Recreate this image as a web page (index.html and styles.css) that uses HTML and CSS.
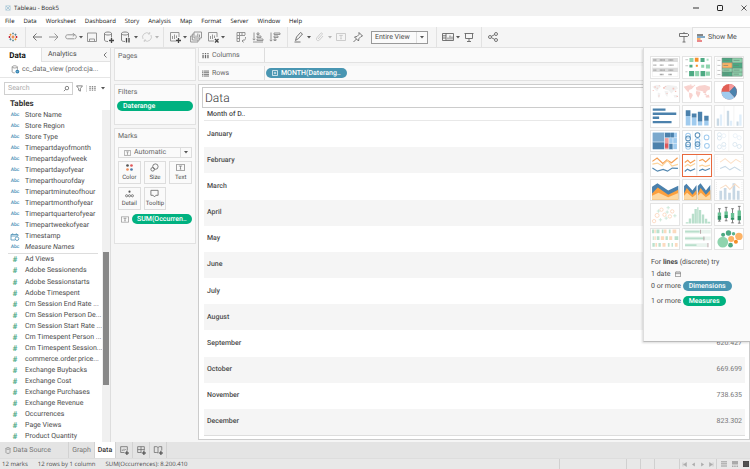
FILE: index.html
```html
<!DOCTYPE html>
<html lang="en">
<head>
	<meta charset="UTF-8">
	<title>Tableau - Book5</title>
	<meta name="viewport" content="width=device-width, initial-scale=1.0">
	<link rel="stylesheet" href="styles.css">
</head>
<body>
	<!-- Shared icons -->
	<svg class="sprite" aria-hidden="true">
		<symbol id="caret" viewBox="0 0 4 3"><path d="M0 0h4L2 2.6z" fill="#555"/></symbol>
		<symbol id="text-box" viewBox="0 0 10 8"><path d="M.5.5h9v7h-9zM3.2 2.4h3.6M5 2.4v3.4M4.2 5.8h1.6" fill="none" stroke="#777" stroke-width=".8"/></symbol>
		<symbol id="database" viewBox="0 0 12 12"><path d="M1.500 2.500v6.500c0 .9 1.300 1.500 3.500 1.500M8.500 2.500v4M1.500 2.500c0-2 7-2 7 0s-7 2-7 0z" fill="none" stroke="#777" stroke-width=".9"/></symbol>
		<symbol id="calendar" viewBox="0 0 8 8"><path d="M.5 1.500h7v6h-7zM.5 3.500h7M2.500 .5v1M5.500 .5v1" fill="none" stroke="#666" stroke-width=".8"/></symbol>
	</svg>

	<!-- Title bar -->
	<header class="title-bar">
		<svg class="app-icon" viewBox="0 0 10 10"><path d="M5 3v4M3 5h4M5 0v2M5 8v2M0 5h2M8 5h2M2 1v2M1 2h2M8 1v2M7 2h2M2 7v2M1 8h2M8 7v2M7 8h2" stroke="#6aa6c4" stroke-width=".9"/></svg>
		<span class="app-name">Tableau - Book5</span>
		<div class="window-buttons">
			<button aria-label="Minimize"><svg viewBox="0 0 8 8"><path d="M1 4h6" stroke="#333"/></svg></button>
			<button aria-label="Maximize"><svg viewBox="0 0 8 8"><rect x="1.500" y="1.500" width="5" height="5" rx=".6" fill="none" stroke="#222"/></svg></button>
			<button aria-label="Close"><svg viewBox="0 0 8 8"><path d="M1.500 1.500l5 5M6.500 1.500l-5 5" stroke="#333" stroke-width=".8"/></svg></button>
		</div>
	</header>

	<nav class="menu">
		<a href="#">File</a>
		<a href="#">Data</a>
		<a href="#">Worksheet</a>
		<a href="#">Dashboard</a>
		<a href="#">Story</a>
		<a href="#">Analysis</a>
		<a href="#">Map</a>
		<a href="#">Format</a>
		<a href="#">Server</a>
		<a href="#">Window</a>
		<a href="#">Help</a>
	</nav>

	<!-- Toolbar -->
	<div class="toolbar">
		<div class="tool-group first">
			<button class="tool" aria-label="Start page"><svg viewBox="0 0 12 12"><path d="M6 4.500v3M4.500 6h3" stroke="#e8762c" stroke-width="1.200"/><path d="M6 1.500v2M5 2.500h2M6 8.500v2M5 9.500h2" stroke="#7199a6"/><path d="M1.500 6h2M2.500 5v2M8.500 6h2M9.500 5v2" stroke="#c72035"/><path d="M3.500 2.700v2M2.500 3.700h2M8.500 7.300v2M7.500 8.300h2" stroke="#eb912c"/><path d="M8.500 2.700v2M7.500 3.700h2M3.500 7.300v2M2.500 8.300h2" stroke="#59879b"/></svg></button>
		</div>
		<div class="tool-group">
			<button class="tool" aria-label="Undo"><svg viewBox="0 0 12 12"><path d="M11 6H2M5.500 2.500L2 6l3.500 3.500" class="line dark"/></svg></button>
			<button class="tool" aria-label="Redo"><svg viewBox="0 0 12 12"><path d="M1 6h9M6.500 2.500L10 6 6.500 9.500" class="line"/></svg></button>
			<button class="tool" aria-label="Replay"><svg viewBox="0 0 12 12"><path d="M9 7.800H2.500c-2.400 0-2.400-4 0-4H9.500c2.400 0 2.400 4 0 4M7.800 2l1.800 1.800-1.800 1.700" class="line"/></svg></button>
			<button class="caret" aria-label="Replay options"><svg><use href="#caret"/></svg></button>
			<button class="tool" aria-label="Save"><svg viewBox="0 0 12 12"><path d="M1.500 2h9v8.500h-9zM3.500 10.500V8h5v2.500" class="line"/></svg></button>
			<button class="tool" aria-label="New data source"><svg viewBox="0 0 12 12"><use href="#database"/><path d="M8.500 7v5M6 9.500h5" class="bold"/></svg></button>
			<button class="tool" aria-label="Pause updates"><svg viewBox="0 0 12 12"><use href="#database"/><path d="M6.500 7v4.500M9 7v4.500" class="bold"/></svg></button>
			<button class="caret" aria-label="Pause options"><svg><use href="#caret"/></svg></button>
			<button class="tool" aria-label="Refresh"><svg viewBox="0 0 12 12"><path d="M2 8a4.300 4.300 0 0 1 6.500-5.300M10 4a4.300 4.300 0 0 1-6.500 5.300M8.700 1v2H7M3.300 11V9H5" class="line faint"/></svg></button>
			<button class="caret faded" aria-label="Refresh options"><svg><use href="#caret"/></svg></button>
		</div>
		<div class="tool-group open">
			<button class="tool" aria-label="New worksheet"><svg viewBox="0 0 12 12"><path d="M7 10H1.500V1.500h8.500V6M3.500 8V5M5.500 8V3.500M7.500 7V4.500" class="line"/><path d="M9.500 7v5M7 9.500h5" class="bold"/></svg></button>
			<button class="caret" aria-label="New options"><svg><use href="#caret"/></svg></button>
			<button class="tool" aria-label="Duplicate"><svg viewBox="0 0 12 12"><path d="M4 1h7.500v6H4zM4 3H2.300v6h7.400V7M2.300 5H.6v6H8V9M6 6V4.500M7.800 6V2.500M9.500 6V3.500" class="line"/></svg></button>
			<button class="tool" aria-label="Clear sheet"><svg viewBox="0 0 12 12"><path d="M7 10H1.500V1.500h8.500V6M3.500 8V5M5.500 8V3.500M7.500 7V4.500" class="line"/><path d="M8 8l3.500 3.500M11.500 8L8 11.500" class="bold"/></svg></button>
			<button class="caret" aria-label="Clear options"><svg><use href="#caret"/></svg></button>
		</div>
		<div class="tool-group">
			<button class="tool" aria-label="Swap rows and columns"><svg viewBox="0 0 12 12"><path d="M2 10.500V1.500h8M4.500 1.500v3M7 1.500v3M10 1.500v2.500M4.500 4.500H10M2 4.500h2.500v6H2M2 7.500h2.500M10.500 6c.3 2.500-1 4-3.500 4M8.500 8.500L7 10l1.500 1.500" class="line"/></svg></button>
			<button class="tool" aria-label="Sort ascending"><svg viewBox="0 0 12 12"><path d="M2 1.500V9M.7 7.800L2 9.200l1.300-1.400M5 2h2v1.500H5zM5 5h4v1.500H5zM5 8h6v1.500H5zM1 11h10" class="line"/></svg></button>
			<button class="tool" aria-label="Sort descending"><svg viewBox="0 0 12 12"><path d="M2 1.500V10M.7 8.800L2 10.200l1.300-1.400M5 2h6v1.500H5zM5 5h4v1.500H5zM5 8h2v1.500H5z" class="line"/></svg></button>
		</div>
		<div class="tool-group open">
			<button class="tool" aria-label="Highlight"><svg viewBox="0 0 12 12"><path d="M2.500 9.500L3.500 6l4-4.500L9.500 3l-4 4.500zM1.500 11h6" class="line dark"/></svg></button>
			<button class="caret" aria-label="Highlight options"><svg><use href="#caret"/></svg></button>
			<button class="tool" aria-label="Group members"><svg viewBox="0 0 12 12"><path d="M4 8l4-4.500c1-1-.3-2.200-1.300-1.200L3 6.600C1.400 8.500 3.700 10.800 5.500 9L9 5" class="line faint"/></svg></button>
			<button class="caret faded" aria-label="Group options"><svg><use href="#caret"/></svg></button>
			<button class="tool faded" aria-label="Show mark labels"><svg class="label-icon" viewBox="0 0 10 8"><use href="#text-box"/></svg></button>
			<button class="tool" aria-label="Fix axes"><svg viewBox="0 0 12 12"><path d="M7 1.500L10.500 5 9 5.500 7 7.500 6.500 10 2.500 6l2.500-.5 2-2zM4.500 8L1.500 11" class="line dark"/></svg></button>
			<div class="fit">
				<select aria-label="Fit"><option>Entire View</option></select>
				<svg class="select-arrow"><use href="#caret"/></svg>
			</div>
		</div>
		<div class="tool-separator"></div>
		<div class="tool-group">
			<button class="tool" aria-label="Show cards"><svg viewBox="0 0 12 12"><path d="M.5 2.500h11v7H.5zM4 2.500v7M.5 4.800H4M.5 7H4M6 8.500v-2M8 8.500V4.500M10 8.500v-3" class="line dark"/></svg></button>
			<button class="caret" aria-label="Card options"><svg><use href="#caret"/></svg></button>
			<button class="tool" aria-label="Presentation mode"><svg viewBox="0 0 12 12"><path d="M1.500 2.500h9M2.500 2.500v5h7v-5M6 7.500v3M4 10.500h4" class="line dark"/></svg></button>
		</div>
		<div class="tool-group open">
			<button class="tool" aria-label="Share"><svg viewBox="0 0 12 12"><circle cx="3" cy="6" r="1.500" class="line dark"/><circle cx="9" cy="3" r="1.500" class="line dark"/><circle cx="9" cy="9" r="1.500" class="line dark"/><path d="M4.400 5.300l3.200-1.600M4.400 6.700l3.200 1.600" class="line dark"/></svg></button>
		</div>
		<button class="tool guide" aria-label="Guide"><svg viewBox="0 0 12 12"><path d="M1.500 2.500h8L11 4 9.500 5.500h-8zM6 1v1.500M6 5.500v5.500M4.500 11h3" class="line dark"/></svg></button>
		<button class="show-me-tab">
			<svg viewBox="0 0 9 8"><path d="M0 1h6" stroke="#555" stroke-width="1.400"/><path d="M0 3h8" stroke="#4e87b0" stroke-width="1.400"/><path d="M0 5h3.500" stroke="#f28e2b" stroke-width="1.400"/><path d="M0 7h5" stroke="#e15759" stroke-width="1.400"/></svg>
			Show Me
		</button>
	</div>

	<main class="workspace">
		<!-- Data pane -->
		<aside class="data-pane">
			<div class="pane-tabs">
				<button class="active">Data</button>
				<button class="analytics">Analytics</button>
				<button class="collapse" aria-label="Collapse pane"><svg viewBox="0 0 4 6"><path d="M3.500.5L1 3l2.500 2.500" class="line dark"/></svg></button>
			</div>
			<a class="source" href="#">
				<svg viewBox="0 0 12 12"><use href="#database"/><circle cx="8.500" cy="8.700" r="2.500" fill="#2c7fb0"/><path d="M7.300 8.700l.9.9 1.500-1.800" fill="none" stroke="#fff" stroke-width=".6"/></svg>
				<span>cc_data_view (prod:cja...</span>
			</a>
			<div class="search-row">
				<div class="search">
					<input type="text" placeholder="Search" aria-label="Search">
					<svg viewBox="0 0 8 8"><circle cx="4.500" cy="3.500" r="2" class="line dark"/><path d="M3 5L1 7" class="line dark"/></svg>
				</div>
				<button aria-label="Filter fields"><svg viewBox="0 0 8 8"><path d="M.6 1h6.800L5 4v3L3 6V4z" class="line dark"/></svg></button>
				<button class="view-as" aria-label="View as list"><svg viewBox="0 0 8 8"><path d="M1.200 1v6M4 1v6M6.800 1v6" stroke="#888" stroke-width="1.600" stroke-dasharray="1.500 .5"/></svg></button>
				<button class="caret" aria-label="View options"><svg><use href="#caret"/></svg></button>
			</div>
			<h2>Tables</h2>
			<div class="fields">
				<div class="field-lists">
					<ul class="dimensions">
						<li><i>Abc</i>Store Name</li>
						<li><i>Abc</i>Store Region</li>
						<li><i>Abc</i>Store Type</li>
						<li><i>Abc</i>Timepartdayofmonth</li>
						<li><i>Abc</i>Timepartdayofweek</li>
						<li><i>Abc</i>Timepartdayofyear</li>
						<li><i>Abc</i>Timeparthourofday</li>
						<li><i>Abc</i>Timepartminuteofhour</li>
						<li><i>Abc</i>Timepartmonthofyear</li>
						<li><i>Abc</i>Timepartquarterofyear</li>
						<li><i>Abc</i>Timepartweekofyear</li>
						<li><svg viewBox="0 0 9 8"><path d="M7.500 3V1.500h-7v5.500h4M.5 3h7M2.200.3v1.200M5.800.3v1.200" fill="none" stroke="#4a8fb5" stroke-width=".8"/><circle cx="6.500" cy="5.700" r="1.800" fill="#fff" stroke="#4a8fb5" stroke-width=".8"/></svg>Timestamp</li>
						<li class="generated"><i>Abc</i>Measure Names</li>
					</ul>
					<ul class="measures">
						<li><i>#</i>Ad Views</li>
						<li><i>#</i>Adobe Sessionends</li>
						<li><i>#</i>Adobe Sessionstarts</li>
						<li><i>#</i>Adobe Timespent</li>
						<li><i>#</i>Cm Session End Rate ...</li>
						<li><i>#</i>Cm Session Person De...</li>
						<li><i>#</i>Cm Session Start Rate ...</li>
						<li><i>#</i>Cm Timespent Person ...</li>
						<li><i>#</i>Cm Timespent Session...</li>
						<li><i>#</i>commerce.order.price...</li>
						<li><i>#</i>Exchange Buybacks</li>
						<li><i>#</i>Exchange Cost</li>
						<li><i>#</i>Exchange Purchases</li>
						<li><i>#</i>Exchange Revenue</li>
						<li><i>#</i>Occurrences</li>
						<li><i>#</i>Page Views</li>
						<li><i>#</i>Product Quantity</li>
					</ul>
				</div>
				<div class="scrollbar"><div class="thumb"></div></div>
			</div>
		</aside>

		<!-- Cards -->
		<section class="cards">
			<div class="card pages"><h3>Pages</h3></div>
			<div class="card filters">
				<h3>Filters</h3>
				<button class="pill green wide">Daterange</button>
			</div>
			<div class="card marks">
				<h3>Marks</h3>
				<div class="mark-type">
					<svg class="mark-icon"><use href="#text-box"/></svg>
					<select aria-label="Mark type"><option>Automatic</option></select>
					<svg class="select-arrow"><use href="#caret"/></svg>
				</div>
				<div class="mark-buttons">
					<button><svg viewBox="0 0 10 10"><circle cx="2.800" cy="2.800" r="1.500" fill="#555"/><circle cx="7.200" cy="2.800" r="1.500" fill="#e15759"/><circle cx="2.800" cy="7.200" r="1.500" fill="#f28e5b"/><circle cx="7.200" cy="7.200" r="1.500" fill="#4e79a7"/></svg>Color</button>
					<button><svg viewBox="0 0 10 10"><circle cx="6" cy="4" r="3" class="line dark"/><circle cx="3" cy="7" r="2" class="line dark"/></svg>Size</button>
					<button><svg viewBox="0 0 10 8"><use href="#text-box"/></svg>Text</button>
					<button><svg viewBox="0 0 10 10"><circle cx="5" cy="3" r="1.200" fill="#555"/><circle cx="1.800" cy="7.500" r="1.200" class="line dark"/><circle cx="5" cy="7.500" r="1.200" class="line dark"/><circle cx="8.200" cy="7.500" r="1.200" class="line dark"/></svg>Detail</button>
					<button><svg viewBox="0 0 10 10"><path d="M1 1.500h8v5.500H6.500L5 8.800 3.500 7H1z" class="line dark"/></svg>Tooltip</button>
				</div>
				<div class="mark-field">
					<svg viewBox="0 0 10 8"><use href="#text-box"/></svg>
					<button class="pill green">SUM(Occurren..</button>
				</div>
			</div>
		</section>

		<section class="sheet">
			<div class="shelf">
				<span class="shelf-name"><svg viewBox="0 0 8 8"><path d="M1.200 1v6M4 1v6M6.800 1v6" stroke="#666" stroke-width="1.400" stroke-dasharray="1.400 .6 4"/></svg>Columns</span>
			</div>
			<div class="shelf">
				<span class="shelf-name"><svg viewBox="0 0 8 8"><path d="M0 1.200h8M0 3.100h8M0 5h8M0 6.900h8" stroke="#666" stroke-dasharray="1.200 .6 8"/></svg>Rows</span>
				<button class="pill blue"><svg viewBox="0 0 6 6"><path d="M.5.5h5v5h-5zM1.800 3h2.400M3 1.800v2.400" fill="none" stroke="#fff" stroke-width=".7"/></svg>MONTH(Daterang..</button>
			</div>
			<div class="view">
				<h1>Data</h1>
				<table>
					<thead><tr><th>Month of D..</th><th></th></tr></thead>
					<tbody>
						<tr><th>January</th><td></td></tr>
						<tr><th>February</th><td></td></tr>
						<tr><th>March</th><td></td></tr>
						<tr><th>April</th><td></td></tr>
						<tr><th>May</th><td></td></tr>
						<tr><th>June</th><td></td></tr>
						<tr><th>July</th><td></td></tr>
						<tr><th>August</th><td></td></tr>
						<tr><th>September</th><td>620.427</td></tr>
						<tr><th>October</th><td>669.699</td></tr>
						<tr><th>November</th><td>738.635</td></tr>
						<tr><th>December</th><td>823.302</td></tr>
					</tbody>
				</table>
			</div>
		</section>

		<!-- Show Me, floats over the sheet -->
		<section class="show-me">
			<div class="chart-types">
				<button aria-label="Text table"><svg viewBox="3 3 81 61"><path d="M6 6h76v12H6zM6 35h76v13H6z" fill="#dcdcdc"/><path d="M6 18v43h76V18" fill="none" stroke="#ddd"/><path d="M9 12h9M28 12h15M54 12h14M9 27h9M28 27h12M54 27h15M9 42h9M28 42h15M54 42h14M28 55h12M54 55h10" stroke="#999" stroke-width="4" stroke-dasharray="3 1"/></svg></button>
				<button aria-label="Heat map"><svg viewBox="3 3 81 61"><path d="M9 11h8M9 29h8M9 47h6" stroke="#aaa" stroke-width="2"/><path d="M21 6h12v12H21zM56 26h9v9h-9zM70 25h12v12H70zM38 45h12v15H38zM70 46h12v13H70z" fill="#8fd4ae"/><path d="M37 5h11v12H37zM40 26h6v6h-6z" fill="#f58f28"/><path d="M54 6h12v12H54zM21 26h9v8h-9zM20 45h15v15H20zM54 45h14v15H54z" fill="#4daa83"/><path d="M72 8h6v6h-6z" fill="#a8ddc0"/></svg></button>
				<button aria-label="Highlight table"><svg viewBox="3 3 81 61"><path d="M7 6h16v54H7z" fill="#fff" stroke="#ddd"/><path d="M9 13h9M9 28h9M9 43h9M9 55h9" stroke="#aaa" stroke-width="2"/><path d="M23 6h30v14H23zM53 20h30v16H53zM23 48h30v12H23z" fill="#4daa83"/><path d="M53 6h30v14H53zM23 36h60v24H53V48H23z" fill="#8fd4ae"/><path d="M23 20h30v16H23z" fill="#fdb366"/><path d="M23 6h60v54H23zM53 6v54M23 20h60M23 36h60M23 48h60" fill="none" stroke="#6a7a70" stroke-width="1.500"/><path d="M27 13h18M57 13h18M27 28h14M57 28h16M27 42h18M57 42h18M27 54h16M57 54h16" stroke="#688275" stroke-width="2"/></svg></button>

				<button aria-label="Symbol map"><svg viewBox="3 3 81 61"><path d="M5 17l14-6 14 4-8 8-5 8-6-6zM22 34l8 3-4 15-4-6zM40 16l12-4 26 3 4 7-12 8-8 7-7-9-12-3zM42 29l12 2-4 17-6-9zM69 42h10v7h-8z" fill="#f1f1f1"/><path d="M12 16h4v4h-4zM19 20h3v3h-3zM25 13h3v3h-3zM38 18h5v5h-5zM44 15h3v3h-3zM66 20h5v5h-5zM73 29h4v4h-4zM78 44h4v4h-4zM24 43h3v3h-3zM7 27h3v3h-3zM48 36h3v3h-3z" fill="#f4c3bd"/></svg></button>
				<button aria-label="Map"><svg viewBox="3 3 81 61"><path d="M4 17l14-4 18 2-8 9-7 2-3 8-8-9zM20 34l9 3 2 6-7 13-4-10zM40 19l10-5 17-2 15 5v8l-9 4-5 10-6-8-9-2-11-1zM41 30l13 2-2 8-5 10-7-13zM69 43l10-2 2 8h-11z" fill="#f8d2ce"/><path d="M22 12h5M34 13h4M62 34h4M66 40h6" stroke="#f3b9b3" stroke-width="2"/></svg></button>
				<button aria-label="Pie chart"><svg viewBox="3 3 81 61"><circle cx="44" cy="32" r="23" fill="#e15f55"/><path d="M44 32V9a23 23 0 0 1 16 7z" fill="#f59a9c"/><path d="M44 32L60 16a23 23 0 0 1 0 33z" fill="#4a82ad"/><path d="M44 32l16 17A23 23 0 0 1 21 32z" fill="#a0cbee"/></svg></button>

				<button aria-label="Horizontal bars"><svg viewBox="3 3 81 61"><path d="M7 14h38M7 26h70M7 38h19M7 51h56" stroke="#4b81ac" stroke-width="7"/></svg></button>
				<button aria-label="Stacked bars"><svg viewBox="3 3 81 61"><path d="M10 33h14v28H10zM28 37h14v24H28zM46 49h13v12H46zM65 47h13v14H65z" fill="#a0cbee"/><path d="M10 16h14v17H10zM28 25h14v12H28zM46 20h13v29H46zM65 32h13v15H65z" fill="#4b81ac"/></svg></button>
				<button aria-label="Side-by-side bars"><svg viewBox="3 3 81 61"><path d="M29 3v61M58 3v61" stroke="#eee" stroke-width="2"/><path d="M7 40h7v22H7zM37 17h7v45h-7zM66 49h6v13h-6z" fill="#c9d9e5"/><path d="M16 28h7v34h-7zM46 47h7v15h-7zM74 28h7v34h-7z" fill="#e0eefa"/></svg></button>

				<button aria-label="Treemap"><svg viewBox="3 3 81 61"><path d="M7 8h72v49H7z" fill="#a0cbee"/><path d="M7 8h34v27H7z" fill="#7ba9cd"/><path d="M7 36h34v21H7zM43 8h17v15H43zM61 8h9v15h-9zM55 40h12v17H55z" fill="#4b81ac"/><path d="M43 24h12v16H43zM43 52h11v5H43z" fill="#f09c9a"/><path d="M43 40h11v13H43z" fill="#e15759"/><path d="M42 8v49M7 36h35M42 23h37M55 24v33M67 24v33M55 40h24" stroke="#fff" stroke-width="1.500"/></svg></button>
				<button aria-label="Circle views"><svg viewBox="3 3 81 61"><g fill="none" stroke-width="3"><path d="M30 3v61M58 3v61" stroke="#eee" stroke-width="2"/><g stroke="#a0cbee"><circle cx="17" cy="17" r="7"/><circle cx="17" cy="50" r="7"/><circle cx="45" cy="32" r="7"/><circle cx="72" cy="22" r="7"/><circle cx="73" cy="47" r="7"/><circle cx="45" cy="50" r="7"/></g><g stroke="#5b91b9"><circle cx="17" cy="25" r="7"/><circle cx="17" cy="43" r="7"/><circle cx="45" cy="15" r="7"/><circle cx="45" cy="42" r="7"/></g></g></svg></button>
				<button aria-label="Side-by-side circles"><svg viewBox="3 3 81 61"><path d="M43 3v61" stroke="#eee" stroke-width="2"/><g fill="none" stroke-width="2" stroke="#d0dfeb"><circle cx="15" cy="14" r="6"/><circle cx="15" cy="24" r="6"/><circle cx="28" cy="43" r="6"/><circle cx="15" cy="50" r="6"/><circle cx="61" cy="43" r="6"/><circle cx="74" cy="49" r="6"/></g><g fill="none" stroke-width="2" stroke="#e2edf6"><circle cx="28" cy="17" r="6"/><circle cx="28" cy="52" r="6"/><circle cx="62" cy="17" r="6"/><circle cx="74" cy="23" r="6"/></g></svg></button>

				<button aria-label="Continuous lines"><svg viewBox="3 3 81 61"><g fill="none" stroke-width="3.500"><path d="M6 22l14-10 17 16 12-10 14 8 18-15" stroke="#f5a055"/><path d="M6 30l15-3 14 8 16-16 13 17 18-5" stroke="#fdd39b"/><path d="M6 42l15 9 17-5 13 5 14-9 17 1" stroke="#5287b0"/></g></svg></button>
				<button class="selected" aria-label="Discrete lines"><svg viewBox="3 3 81 61"><path d="M43 3v61" stroke="#ccc" stroke-width="2"/><g fill="none" stroke-width="3.500"><path d="M7 25l9-6 8 8 14-9M50 20l10-4 9 8 13-12" stroke="#f5a055"/><path d="M7 37l9-6 8 5 14-8M50 36l9-3 10 4 13-4" stroke="#fdd39b"/><path d="M7 52l8-7 9 5 14-6M50 50l10-5 8 4 14-6" stroke="#5287b0"/></g></svg></button>
				<button aria-label="Dual lines"><svg viewBox="3 3 81 61"><g fill="none" stroke-width="3"><path d="M17 24l15-10 17 14 15-12 15 9" stroke="#fce0c7"/><path d="M17 43l15-6 14 10 14-8 18 11" stroke="#c8d9e6"/></g><path d="M8 9v44M82 9v44" stroke="#eee" stroke-width="3" stroke-dasharray="2 4"/></svg></button>

				<button aria-label="Continuous area"><svg viewBox="3 3 81 61"><path d="M5 23l16-10 32 21 30-14v42H5z" fill="#4b81ac"/><path d="M5 43l17-18 31 22 30-15v30H5z" fill="#fca03e"/><path d="M5 50l19-9 29 13 30-12v20H5z" fill="#fed9a3"/></svg></button>
				<button aria-label="Discrete area"><svg viewBox="3 3 81 61"><path d="M5 21l7-7 18 20 12-16v44H5zM46 21l8-8 16 21 13-16v44H46z" fill="#4b81ac"/><path d="M5 43l8-16 17 20 12-14v29H5zM46 43l8-16 16 20 13-14v29H46z" fill="#fca03e"/><path d="M5 50l9-9 16 13 12-9v17H5zM46 50l9-9 15 13 13-9v17H46z" fill="#fed9a3"/></svg></button>
				<button aria-label="Dual combination"><svg viewBox="3 3 81 61"><path d="M15 35h8v27h-8zM28 27h8v35h-8zM41 41h8v21h-8zM54 13h8v49h-8zM67 35h8v27h-8z" fill="#c7d7e4"/><path d="M17 28l17-10 12 13 15-16 14 12" fill="none" stroke="#f9ddc5" stroke-width="3"/><path d="M6 9v53M82 9v53" stroke="#e6e6e6" stroke-width="3" stroke-dasharray="2 4"/></svg></button>

				<button aria-label="Scatter plot"><svg viewBox="3 3 81 61"><g fill="none" stroke="#fbd7bd" stroke-width="2.500"><circle cx="33" cy="20" r="5"/><circle cx="65" cy="25" r="5"/><circle cx="20" cy="37" r="6"/><circle cx="42" cy="35" r="5"/><circle cx="11" cy="54" r="5"/><circle cx="58" cy="40" r="5"/></g><path d="M48 14h10M53 9v10M19 24h10M24 19v10M45 27h10M50 22v10M25 50h10M30 45v10M42 45h10M47 40v10M68 38h10M73 33v10" stroke="#c9e6d6" stroke-width="2.500"/></svg></button>
				<button aria-label="Histogram"><svg viewBox="3 3 81 61"><path d="M10 57h8v4h-8zM19 46h7v15h-7zM28 32h7v29h-7zM36 18h7v43h-7zM44 13h4v48h-4zM49 21h7v40h-7zM58 34h7v27h-7zM67 47h7v14h-7zM75 56h8v5h-8z" fill="#b9dfcc"/></svg></button>
				<button aria-label="Box-and-whisker plot"><svg viewBox="3 3 81 61"><path d="M15 17v37M35 13v40M54 17v42M74 10v50M11 17h8M11 54h8M31 13h8M31 53h8M50 17h8M50 59h8M70 10h8M70 60h8" stroke="#666" stroke-width="2.500"/><path d="M10 28h10v10H10zM30 25h10v11H30zM49 30h10v14H49zM69 22h10v17H69z" fill="#69c295"/><path d="M10 38h10v12H10zM30 36h10v9H30zM49 44h10v6H49zM69 39h10v12H69z" fill="#2f9365"/></svg></button>

				<button aria-label="Gantt chart"><svg viewBox="3 3 81 61"><path d="M5 10h6M18 10h9M34 10h5M55 10h5M7 30h3M19 30h8M45 30h7M72 30h11M6 50h7M24 50h7M52 50h5M63 50h4" stroke="#bce1cd" stroke-width="11"/><path d="M12 10h4M40 10h8M66 10h11M12 30h4M31 30h10M56 30h9M15 50h5M36 50h9M73 50h8" stroke="#fcdabf" stroke-width="11"/></svg></button>
				<button aria-label="Bullet graph"><svg viewBox="3 3 81 61"><path d="M8 11h76M8 31h76M8 51h66" stroke="#e9f4ee" stroke-width="11"/><path d="M8 11h43M8 31h58M8 51h34" stroke="#b9dfcc" stroke-width="5"/><path d="M54 5v12M64 25v12M76 45v12" stroke="#bba9aa" stroke-width="3"/></svg></button>
				<button aria-label="Packed bubbles"><svg viewBox="3 3 81 61"><circle cx="25" cy="42" r="16" fill="#8fd4ae"/><circle cx="42" cy="15" r="8" fill="#4daa83"/><circle cx="57" cy="17" r="5" fill="#59b28d"/><circle cx="26" cy="20" r="6" fill="#4daa83"/><circle cx="73" cy="25" r="11" fill="#fdb366"/><circle cx="50" cy="33" r="9" fill="#fdb366"/><circle cx="64" cy="41" r="6" fill="#f58f28"/><circle cx="48" cy="51" r="7" fill="#4daa83"/></svg></button>
			</div>
			<p>For <b>lines</b> (discrete) try</p>
			<p>1 date <svg><use href="#calendar"/></svg></p>
			<p>0 or more <span class="pill blue">Dimensions</span></p>
			<p class="last">1 or more <span class="pill green">Measures</span></p>
		</section>
	</main>

	<!-- Sheet tabs -->
	<nav class="sheet-tabs">
		<a class="data-source" href="#"><svg viewBox="0 0 10 12"><path d="M1.500 2.500v7c0 2 7 2 7 0v-7c0-2-7-2-7 0s7 2 7 0" class="line dark"/></svg>Data Source</a>
		<a class="graph" href="#">Graph</a>
		<a class="current" href="#">Data</a>
		<button aria-label="New worksheet"><svg viewBox="0 0 12 12"><path d="M6.500 9H2V2h8v4.500M4 7V5.500M6 7V4.500M8 6V5" class="line dark"/><path d="M9.500 7v5M7 9.500h5" class="bold"/></svg></button>
		<button aria-label="New dashboard"><svg viewBox="0 0 12 12"><path d="M6.500 9H2V2h8v4.500M6 2v7M2 5.500h8" class="line dark"/><path d="M9.500 7v5M7 9.500h5" class="bold"/></svg></button>
		<button aria-label="New story"><svg viewBox="0 0 12 12"><path d="M6 9.500L4.500 9H1.500V2h3L6 3l1.500-1h3v4.500M6 3v6.500" class="line dark"/><path d="M9.500 7v5M7 9.500h5" class="bold"/></svg></button>
	</nav>

	<footer class="status">
		<span>12 marks</span>
		<span>12 rows by 1 column</span>
		<span>SUM(Occurrences): 8.200.410</span>
		<div class="status-cells"><i class="message"></i><i></i><i></i><i class="user"></i></div>
		<div class="sheet-nav">
			<button aria-label="First sheet"><svg viewBox="0 0 5 5"><path d="M1 .5v4M4.500.5v4L1.500 2.500z" fill="#aaa" stroke="#aaa" stroke-width=".5"/></svg></button>
			<button aria-label="Previous sheet"><svg viewBox="0 0 5 5"><path d="M3.800.5v4L1 2.500z" fill="#aaa"/></svg></button>
			<button aria-label="Next sheet"><svg viewBox="0 0 5 5"><path d="M1.200.5v4L4 2.500z" fill="#aaa"/></svg></button>
			<button aria-label="Last sheet"><svg viewBox="0 0 5 5"><path d="M4 .5v4M.5.5v4l3-2z" fill="#aaa" stroke="#aaa" stroke-width=".5"/></svg></button>
		</div>
		<div class="view-modes">
			<button aria-label="Show tabs"><svg viewBox="0 0 6 6"><path d="M1 0v6M3 0v6M5 0v6" stroke="#999" stroke-width="1.300" stroke-dasharray="1.500 .6"/></svg></button>
			<button aria-label="Show filmstrip"><svg viewBox="0 0 6 6"><path d="M0 0h6v3.500H0zM0 4.500h1.500V6H0zM2.200 4.500h1.500V6H2.200zM4.500 4.500H6V6H4.500z" fill="#aaa"/></svg></button>
			<button aria-label="Show sheet sorter"><svg viewBox="0 0 6 6"><path d="M0 0h6v6H0z" fill="#444"/><path d="M0 2h6M0 4h6M2 0v6M4 0v6" stroke="#777" stroke-width=".3"/></svg></button>
		</div>
	</footer>
</body>
</html>
```
FILE: styles.css
```css
*{
	box-sizing: border-box;
}

body{
	margin: 0;
	height: 100vh;
	display: flex;
	flex-direction: column;
	overflow: hidden;
	font-family: Roboto, "Liberation Sans", sans-serif;
	font-size: 7px;
	line-height: 9px;
	text-rendering: geometricPrecision;
	color: #4c4c4c;
	background: #f5f5f5;
}

h1, h2, h3, p, ul{
	margin: 0;
	padding: 0;
	font-size: 7px;
	font-weight: normal;
}

ul{
	list-style: none;
}

a{
	color: inherit;
	text-decoration: none;
}

button, select, input{
	margin: 0;
	padding: 0;
	border: 0;
	background: none;
	font: inherit;
	color: inherit;
	border-radius: 0;
	text-rendering: inherit;
}

button{
	display: flex;
	align-items: center;
	justify-content: center;
}

svg{
	display: block;
	flex: none;
}

.sprite{
	position: absolute;
	width: 0;
	height: 0;
}

.line{
	fill: none;
	stroke: #8c8c8c;
	stroke-width: .9;
}

.dark{
	stroke: #666;
}

.faint{
	stroke: #c8c8c8;
}

.bold{
	fill: none;
	stroke: #444;
	stroke-width: 1.3;
}

/* Title bar and menu */
.title-bar, .menu, .status{
	font-family: "Open Sans", "Noto Sans", sans-serif;
	font-size: 6px;
}

.title-bar{
	display: flex;
	align-items: center;
	height: 16px;
	flex: none;
	padding: 0 2px 0 5px;
	background: #f2f2f2;
	color: #222;
}

.app-icon{
	width: 6px;
	height: 6px;
	margin-right: 3px;
}

.window-buttons{
	display: flex;
	gap: 16px;
	margin-left: auto;
}

.window-buttons svg{
	width: 8px;
	height: 8px;
}

.menu{
	display: flex;
	align-items: center;
	gap: 9px;
	height: 11px;
	flex: none;
	padding: 0 5px;
	background: #fff;
	color: #111;
}

/* Toolbar */
.toolbar{
	display: flex;
	align-items: center;
	height: 21px;
	flex: none;
	background: #f5f5f5;
	border-bottom: 1px solid #e2e2e2;
}

.tool-group{
	display: flex;
	align-items: center;
	align-self: stretch;
	padding: 0 4px 0 2px;
	border-right: 1px solid #e2e2e2;
}

.tool-group.first{
	padding-left: 4px;
}

.tool-group.open{
	border-color: transparent;
}

.tool-separator{
	align-self: stretch;
	margin-left: 3px;
	border-right: 1px solid #e2e2e2;
}

.tool{
	width: 17px;
	height: 16px;
}

.tool svg{
	width: 12px;
	height: 12px;
}

.tool .label-icon{
	width: 10px;
	height: 8px;
}

.caret{
	width: 4px;
	height: 16px;
}

.caret svg, .select-arrow{
	width: 4px;
	height: 3px;
	pointer-events: none;
}

.faded{
	opacity: .4;
}

.fit{
	display: flex;
	align-items: center;
	width: 57px;
	height: 13px;
	margin-left: 5px;
	border: 1px solid #999;
	background: #fafafa;
}

.fit select, .mark-type select{
	flex: 1;
	min-width: 0;
	height: 100%;
	appearance: none;
	outline: 0;
}

.fit select{
	padding-left: 3px;
	border-right: 1px solid #ddd;
}

.select-arrow{
	margin: 0 3px;
}

.guide{
	margin-left: auto;
}

.show-me-tab{
	justify-content: flex-start;
	gap: 2px;
	width: 58px;
	height: 20px;
	padding-left: 4px;
	background: #fafafa;
	border-left: 1px solid #e2e2e2;
	border-top: 1px solid #e2e2e2;
	align-self: flex-end;
}

.show-me-tab svg{
	width: 9px;
	height: 8px;
}

.workspace{
	position: relative;
	display: flex;
	flex: 1;
	min-height: 0;
}

/* Data pane */
.data-pane{
	display: flex;
	flex-direction: column;
	width: 111px;
	flex: none;
	background: #fff;
	border-right: 1px solid #ddd;
}

.pane-tabs{
	display: flex;
	height: 14px;
	flex: none;
}

.pane-tabs button{
	background: #f7f7f7;
	border-bottom: 1px solid #e2e2e2;
}

.pane-tabs .active{
	width: 42px;
	padding-right: 6px;
	background: #fff;
	border-bottom: 0;
	border-right: 1px solid #e2e2e2;
	color: #111;
	font-size: 8px;
	font-weight: bold;
}

.pane-tabs .analytics{
	flex: 1;
	justify-content: flex-start;
	padding-left: 6px;
}

.pane-tabs .collapse{
	width: 10px;
}

.collapse svg{
	width: 4px;
	height: 6px;
}

.source{
	display: flex;
	align-items: center;
	gap: 2px;
	height: 16px;
	flex: none;
	padding-left: 11px;
	border-bottom: 1px solid #e6e6e6;
	color: #666;
}

.source svg{
	width: 9px;
	height: 9px;
}

.search-row{
	display: flex;
	align-items: center;
	height: 13px;
	flex: none;
	margin: 4px 4px 3px;
	gap: 3px;
}

.search{
	display: flex;
	align-items: center;
	width: 69px;
	flex: none;
	height: 13px;
	border: 1px solid #d0d0d0;
}

.search input{
	flex: 1;
	min-width: 0;
	padding-left: 3px;
	outline: 0;
}

.search input::placeholder{
	color: #aaa;
	opacity: 1;
}

.search svg, .search-row button:not(.caret) svg{
	width: 7px;
	height: 7px;
}

.search svg{
	margin-right: 2px;
}

.search-row .view-as{
	padding-left: 2px;
	border-left: 1px solid #ddd;
}

.search-row .caret{
	margin-left: 2px;
}

.data-pane h2{
	flex: none;
	height: 12px;
	padding-left: 10px;
	font-size: 8px;
	line-height: 12px;
	font-weight: bold;
	color: #333;
}

.fields{
	display: flex;
	flex: 1;
	min-height: 0;
}

.field-lists{
	display: flex;
	flex-direction: column;
	flex: 1;
	min-width: 0;
}

.field-lists ul{
	display: flex;
	flex-direction: column;
	margin-left: 8px;
	margin-right: 4px;
}

.dimensions{
	flex: 13;
	border-bottom: 1px solid #ddd;
}

.measures{
	flex: 17;
}

.field-lists li{
	display: flex;
	align-items: center;
	flex: 1;
	min-height: 0;
	white-space: nowrap;
}

.field-lists i, .field-lists svg{
	flex: none;
	width: 14px;
	margin-right: 3px;
	text-align: center;
	font-style: normal;
	font-size: 5px;
	font-weight: 500;
	color: #4a8fb5;
}

.field-lists svg{
	height: 8px;
}

.field-lists .measures i{
	font-size: 8px;
	color: #45a580;
}

.generated{
	font-style: italic;
}

.scrollbar{
	width: 8px;
	background: #f0f0f0;
	padding: 142px 1px 0;
}

.thumb{
	height: 133px;
	background: #888;
}

/* Cards */
.cards{
	display: flex;
	flex-direction: column;
	gap: 3px;
	width: 87px;
	flex: none;
	padding: 0 2px 0 3px;
}

.card{
	padding: 3px 2px;
	background: #fafafa;
	border: 1px solid #e2e2e2;
}

.card h3{
	padding-left: 1px;
	color: #666;
}

.pages{
	height: 33px;
}

.filters{
	height: 41px;
}

.marks{
	height: 116px;
}

.pill{
	display: flex;
	align-items: center;
	justify-content: flex-start;
	gap: 3px;
	height: 10px;
	padding: 0 6px;
	border-radius: 5px;
	color: #fff;
	font-weight: 500;
	white-space: nowrap;
}

.green{
	background: #00b180;
}

.blue{
	background: #4996b2;
}

.pill.wide{
	width: 100%;
	margin-top: 4px;
}

.mark-type{
	display: flex;
	align-items: center;
	height: 11px;
	margin: 6px 1px 3px;
	border: 1px solid #ddd;
	color: #666;
}

.mark-type select{
	border-right: 1px solid #ddd;
}

.mark-icon{
	width: 7px;
	height: 6px;
	margin: 0 3px 0 5px;
}

.mark-buttons{
	display: grid;
	grid-template-columns: repeat(3, 1fr);
	gap: 3px;
	margin: 0 1px;
}

.mark-buttons button{
	flex-direction: column;
	gap: 1px;
	height: 23px;
	border: 1px solid #ddd;
	font-size: 6px;
}

.mark-buttons svg{
	width: 9px;
	height: 9px;
}

.mark-field{
	display: flex;
	align-items: center;
	gap: 3px;
	margin: 4px 3px 0 4px;
}

.mark-field svg{
	width: 8px;
	height: 7px;
}

.mark-field .pill{
	flex: 1;
	padding: 0 5px;
}

/* Sheet */
.sheet{
	display: flex;
	flex-direction: column;
	gap: 3px;
	flex: 1;
	min-width: 0;
	padding-bottom: 2px;
}

.shelf{
	display: flex;
	align-items: center;
	gap: 1px;
	height: 15px;
	flex: none;
	background: #fafafa;
	border: 1px solid #e2e2e2;
	border-top-width: 0;
}

.shelf-name{
	display: flex;
	align-items: center;
	align-self: stretch;
	gap: 3px;
	width: 66px;
	padding-left: 3px;
	border-right: 1px solid #ddd;
	color: #666;
}

.shelf-name svg{
	width: 7px;
	height: 7px;
}

.shelf .pill svg{
	width: 6px;
	height: 6px;
}

.view{
	display: flex;
	flex-direction: column;
	flex: 1;
	min-height: 0;
	padding: 2px 3px 3px;
	background: #fff;
	border: 1px solid #ccc;
}

.view h1{
	height: 21px;
	flex: none;
	padding-left: 2px;
	border: 1px solid #ccc;
	font-size: 12px;
	line-height: 20px;
	font-weight: 300;
	color: #333;
}

.view table{
	flex: 1;
	display: flex;
	flex-direction: column;
	margin: 1px 1px 0 2px;
	border-bottom: 1px solid #ddd;
	min-height: 0;
}

.view tbody{
	display: flex;
	flex-direction: column;
	flex: 1;
}

.view tr{
	display: flex;
	align-items: center;
	justify-content: space-between;
	padding: 0 3px;
}

.view thead tr{
	height: 12px;
	border-bottom: 1px solid #e8e8e8;
}

.view tbody tr{
	flex: 1;
}

.view tbody tr:nth-child(even){
	background: #f5f5f5;
}

.view th{
	padding: 0;
	font-weight: 500;
}

.view td{
	padding: 0;
	color: #777;
}

/* Show Me */
.show-me{
	position: absolute;
	top: 0;
	right: 0;
	width: 107px;
	height: 294px;
	padding: 8px 6px;
	background: #fafafa;
	border-left: 1px solid #ddd;
	border-bottom: 1px solid #bbb;
	box-shadow: -1px 1px 2px rgba(0, 0, 0, .15);
}

.chart-types{
	display: grid;
	grid-template-columns: repeat(3, 1fr);
	gap: 2px;
	margin-bottom: 6px;
}

.chart-types button{
	aspect-ratio: 4 / 3;
	background: #fff;
	border: 1px solid #e4e4e4;
	min-width: 0;
	min-height: 0;
}

.chart-types .selected{
	border-color: #e8683c;
}

.chart-types svg{
	width: 100%;
	height: 100%;
}

.show-me p{
	display: flex;
	align-items: center;
	height: 12px;
	padding-left: 1px;
	white-space: pre;
}

.show-me p svg{
	width: 6px;
	height: 6px;
	margin-left: 3px;
}

.show-me .last{
	margin-top: 3px;
}

/* Bottom bars */
.sheet-tabs{
	display: flex;
	height: 16px;
	flex: none;
	background: #e4e4e4;
	color: #777;
}

.sheet-tabs a, .sheet-tabs button{
	display: flex;
	align-items: center;
	justify-content: center;
	border-right: 1px solid #d2d2d2;
}

.sheet-tabs .data-source{
	width: 69px;
	justify-content: flex-start;
	gap: 2px;
	padding-left: 5px;
}

.data-source svg{
	width: 6px;
	height: 7px;
}

.sheet-tabs .graph{
	width: 26px;
}

.sheet-tabs .current{
	width: 21px;
	background: #fff;
	color: #333;
	font-weight: 500;
}

.sheet-tabs button{
	width: 17px;
}

.sheet-tabs button svg{
	width: 10px;
	height: 10px;
}

.status{
	display: flex;
	align-items: center;
	gap: 10px;
	height: 11px;
	flex: none;
	padding-left: 2px;
	background: #e8e8e8;
	border-top: 1px solid #ddd;
}

.status-cells{
	display: flex;
	align-self: stretch;
	margin-left: auto;
	margin-right: -10px;
}

.status-cells i{
	width: 14px;
	border-left: 1px solid #d0d0d0;
}

.status-cells .message{
	width: 67px;
}

.status-cells .user{
	width: 25px;
}

.sheet-nav, .view-modes{
	display: flex;
	align-items: center;
	align-self: stretch;
	border-left: 1px solid #d0d0d0;
}

.sheet-nav{
	justify-content: center;
	gap: 4px;
	width: 37px;
	margin-right: -10px;
}

.sheet-nav svg{
	width: 5px;
	height: 5px;
}

.view-modes{
	gap: 5px;
	padding: 0 1px 0 4px;
}

.view-modes svg{
	width: 6px;
	height: 6px;
}
```
